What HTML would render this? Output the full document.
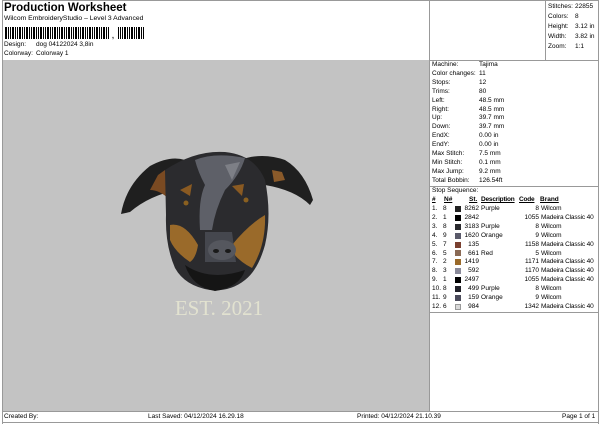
<!DOCTYPE html>
<html><head><style>
*{margin:0;padding:0;box-sizing:border-box}
body{width:600px;height:424px;background:#fff;font-family:"Liberation Sans",Arial,sans-serif;font-size:6.5px;color:#000;position:relative;overflow:hidden}
.a{position:absolute;white-space:nowrap}
.line{position:absolute;background:#999}
</style></head><body>
<div class="a" style="left:4px;top:2px;font-size:11.5px;font-weight:bold">Production Worksheet</div>
<div class="a" style="left:4px;top:15px;font-size:6.8px">Wilcom EmbroideryStudio – Level 3 Advanced</div>
<div class="a" style="left:5px;top:27px;width:140px;height:12px;background:repeating-linear-gradient(90deg,#000 0 2px,#fff 2px 3px,#000 3px 4px,#fff 4px 5px,#000 5px 6px,#fff 6px 7px);"></div>
<div class="a" style="left:110px;top:27px;width:8px;height:14px;background:#fff"></div>
<div class="a" style="left:112px;top:33px;font-size:7px;font-weight:bold">,</div>
<div class="a" style="left:4px;top:41px">Design:</div><div class="a" style="left:36px;top:41px">dog 04122024 3,8in</div>
<div class="a" style="left:4px;top:50px">Colorway:</div><div class="a" style="left:36px;top:50px">Colorway 1</div>

<div class="line" style="left:2px;top:0;width:1px;height:424px"></div>
<div class="line" style="left:598px;top:0;width:1px;height:424px"></div>
<div class="line" style="left:429px;top:0;width:1px;height:411px"></div>
<div class="line" style="left:545px;top:0;width:1px;height:60px"></div>
<div class="line" style="left:2px;top:0;width:597px;height:1px"></div>
<div class="line" style="left:430px;top:60px;width:169px;height:1px"></div>
<div class="line" style="left:430px;top:186px;width:169px;height:1px"></div>
<div class="line" style="left:430px;top:312px;width:169px;height:1px"></div>
<div class="line" style="left:2px;top:411px;width:597px;height:1px"></div>
<div class="line" style="left:2px;top:422px;width:597px;height:1px"></div>
<div class="a" style="left:3px;top:60px;width:426px;height:351px;background:#c3c3c3"></div>

<svg class="a" style="left:3px;top:60px" width="426" height="351" viewBox="3 60 426 351">
<path d="M121 214 Q126 185 150 166 Q170 155 185 160 L178 190 Q150 195 130 212 Z" fill="#1f1f1f"/>
<path d="M240 160 Q262 152 285 160 Q305 172 313 200 L310 205 Q295 190 265 185 Z" fill="#1f1f1f"/>
<path d="M158 175 L165 170 L170 200 Q160 190 150 190 Z" fill="#7a4a22"/>
<path d="M272 170 L282 172 L285 180 L274 182 Z" fill="#8a5a2a"/>
<path d="M165 170 Q195 150 225 152 Q255 155 265 180 Q272 215 265 245 Q258 270 245 280 Q230 292 210 290 Q185 286 175 268 Q165 245 166 215 Z" fill="#2b2b2e"/>
<path d="M195 160 Q215 152 245 158 Q240 175 225 190 Q215 210 212 230 L200 230 Q198 200 205 185 Q198 172 195 160 Z" fill="#5e6068"/>
<path d="M225 165 L240 162 L232 180 Z" fill="#7d7f86"/>
<path d="M180 190 L192 184 L190 196 Z" fill="#8a5a22"/>
<path d="M232 186 L244 184 L242 196 Z" fill="#8a5a22"/>
<path d="M170 225 Q185 222 198 245 Q196 258 190 262 Q175 252 170 240 Z" fill="#9a6a2a"/>
<path d="M232 245 Q248 225 265 215 Q266 245 252 268 Q240 262 232 252 Z" fill="#9a6a2a"/>
<path d="M205 232 L232 232 L236 262 L205 262 Z" fill="#45474e"/>
<ellipse cx="222" cy="250" rx="14" ry="10" fill="#55575e"/>
<ellipse cx="216" cy="251" rx="3" ry="2" fill="#1a1a1a"/><ellipse cx="228" cy="251" rx="3" ry="2" fill="#1a1a1a"/>
<path d="M185 265 Q210 282 245 270 Q240 287 215 291 Q192 287 185 265 Z" fill="#151515"/>
<circle cx="186" cy="203" r="2.5" fill="#8a6020"/><circle cx="246" cy="200" r="2.5" fill="#8a6020"/>
<text x="219" y="315" text-anchor="middle" font-family="Liberation Serif,serif" font-size="21" fill="#e2e2d0">EST. 2021</text>
</svg>

<div class="a" style="left:548px;top:2px;line-height:10px">Stitches:<br>Colors:<br>Height:<br>Width:<br>Zoom:</div>
<div class="a" style="left:575px;top:2px;line-height:10px">22855<br>8<br>3.12 in<br>3.82 in<br>1:1</div>

<div class="a" style="left:432px;top:61px;line-height:8.9px">Machine:<br>Color changes:<br>Stops:<br>Trims:<br>Left:<br>Right:<br>Up:<br>Down:<br>EndX:<br>EndY:<br>Max Stitch:<br>Min Stitch:<br>Max Jump:<br>Total Bobbin:</div>
<div class="a" style="left:479px;top:61px;line-height:8.9px">Tajima<br>11<br>12<br>80<br>48.5 mm<br>48.5 mm<br>39.7 mm<br>39.7 mm<br>0.00 in<br>0.00 in<br>7.5 mm<br>0.1 mm<br>9.2 mm<br>126.54ft</div>

<div class="a" style="left:432px;top:187px">Stop Sequence:</div>
<div class="a" style="left:432px;top:196px;font-weight:bold;text-decoration:underline">#</div>
<div class="a" style="left:444px;top:196px;font-weight:bold;text-decoration:underline">N#</div>
<div class="a" style="left:469px;top:196px;font-weight:bold;text-decoration:underline">St.</div>
<div class="a" style="left:481px;top:196px;font-weight:bold;text-decoration:underline;letter-spacing:-0.2px">Description</div>
<div class="a" style="left:519px;top:196px;font-weight:bold;text-decoration:underline;letter-spacing:-0.2px">Code</div>
<div class="a" style="left:540px;top:196px;font-weight:bold;text-decoration:underline">Brand</div>
<div class="a" style="left:432px;top:205px;line-height:8.9px">1.<br>2.<br>3.<br>4.<br>5.<br>6.<br>7.<br>8.<br>9.<br>10.<br>11.<br>12.</div>
<div class="a" style="left:443px;top:205px;line-height:8.9px">8<br>1<br>8<br>9<br>7<br>5<br>2<br>3<br>1<br>8<br>9<br>6</div>
<div class="a" style="left:462px;top:205px;line-height:8.9px;width:17px;text-align:right">8262<br>2842<br>3183<br>1620<br>135<br>661<br>1419<br>592<br>2497<br>499<br>159<br>984</div>
<div class="a" style="left:481px;top:205px;line-height:8.9px">Purple<br>&nbsp;<br>Purple<br>Orange<br>&nbsp;<br>Red<br>&nbsp;<br>&nbsp;<br>&nbsp;<br>Purple<br>Orange<br>&nbsp;</div>
<div class="a" style="left:518px;top:205px;line-height:8.9px;width:21px;text-align:right">8<br>1055<br>8<br>9<br>1158<br>5<br>1171<br>1170<br>1055<br>8<br>9<br>1342</div>
<div class="a" style="left:541px;top:205px;line-height:8.9px;letter-spacing:-0.15px">Wilcom<br>Madeira Classic 40<br>Wilcom<br>Wilcom<br>Madeira Classic 40<br>Wilcom<br>Madeira Classic 40<br>Madeira Classic 40<br>Madeira Classic 40<br>Wilcom<br>Wilcom<br>Madeira Classic 40</div>
<div class="a" style="left:455px;top:206px;width:6px">
<div style="height:6px;background:#222;margin-bottom:2.9px"></div>
<div style="height:6px;background:#000;margin-bottom:2.9px"></div>
<div style="height:6px;background:#2a2a2e;margin-bottom:2.9px"></div>
<div style="height:6px;background:#5a5a6a;margin-bottom:2.9px"></div>
<div style="height:6px;background:#7a4030;margin-bottom:2.9px"></div>
<div style="height:6px;background:#8a6a55;margin-bottom:2.9px"></div>
<div style="height:6px;background:#9a6a2a;margin-bottom:2.9px"></div>
<div style="height:6px;background:#8a8a9a;margin-bottom:2.9px"></div>
<div style="height:6px;background:#000;margin-bottom:2.9px"></div>
<div style="height:6px;background:#22222a;margin-bottom:2.9px"></div>
<div style="height:6px;background:#4a4a5a;margin-bottom:2.9px"></div>
<div style="height:6px;background:#d8d8d8;border:1px solid #999"></div>
</div>

<div class="a" style="left:4px;top:413px">Created By:</div>
<div class="a" style="left:148px;top:413px">Last Saved: 04/12/2024 16.29.18</div>
<div class="a" style="left:357px;top:413px">Printed: 04/12/2024 21.10.39</div>
<div class="a" style="left:562px;top:413px">Page 1 of 1</div>
</body></html>
